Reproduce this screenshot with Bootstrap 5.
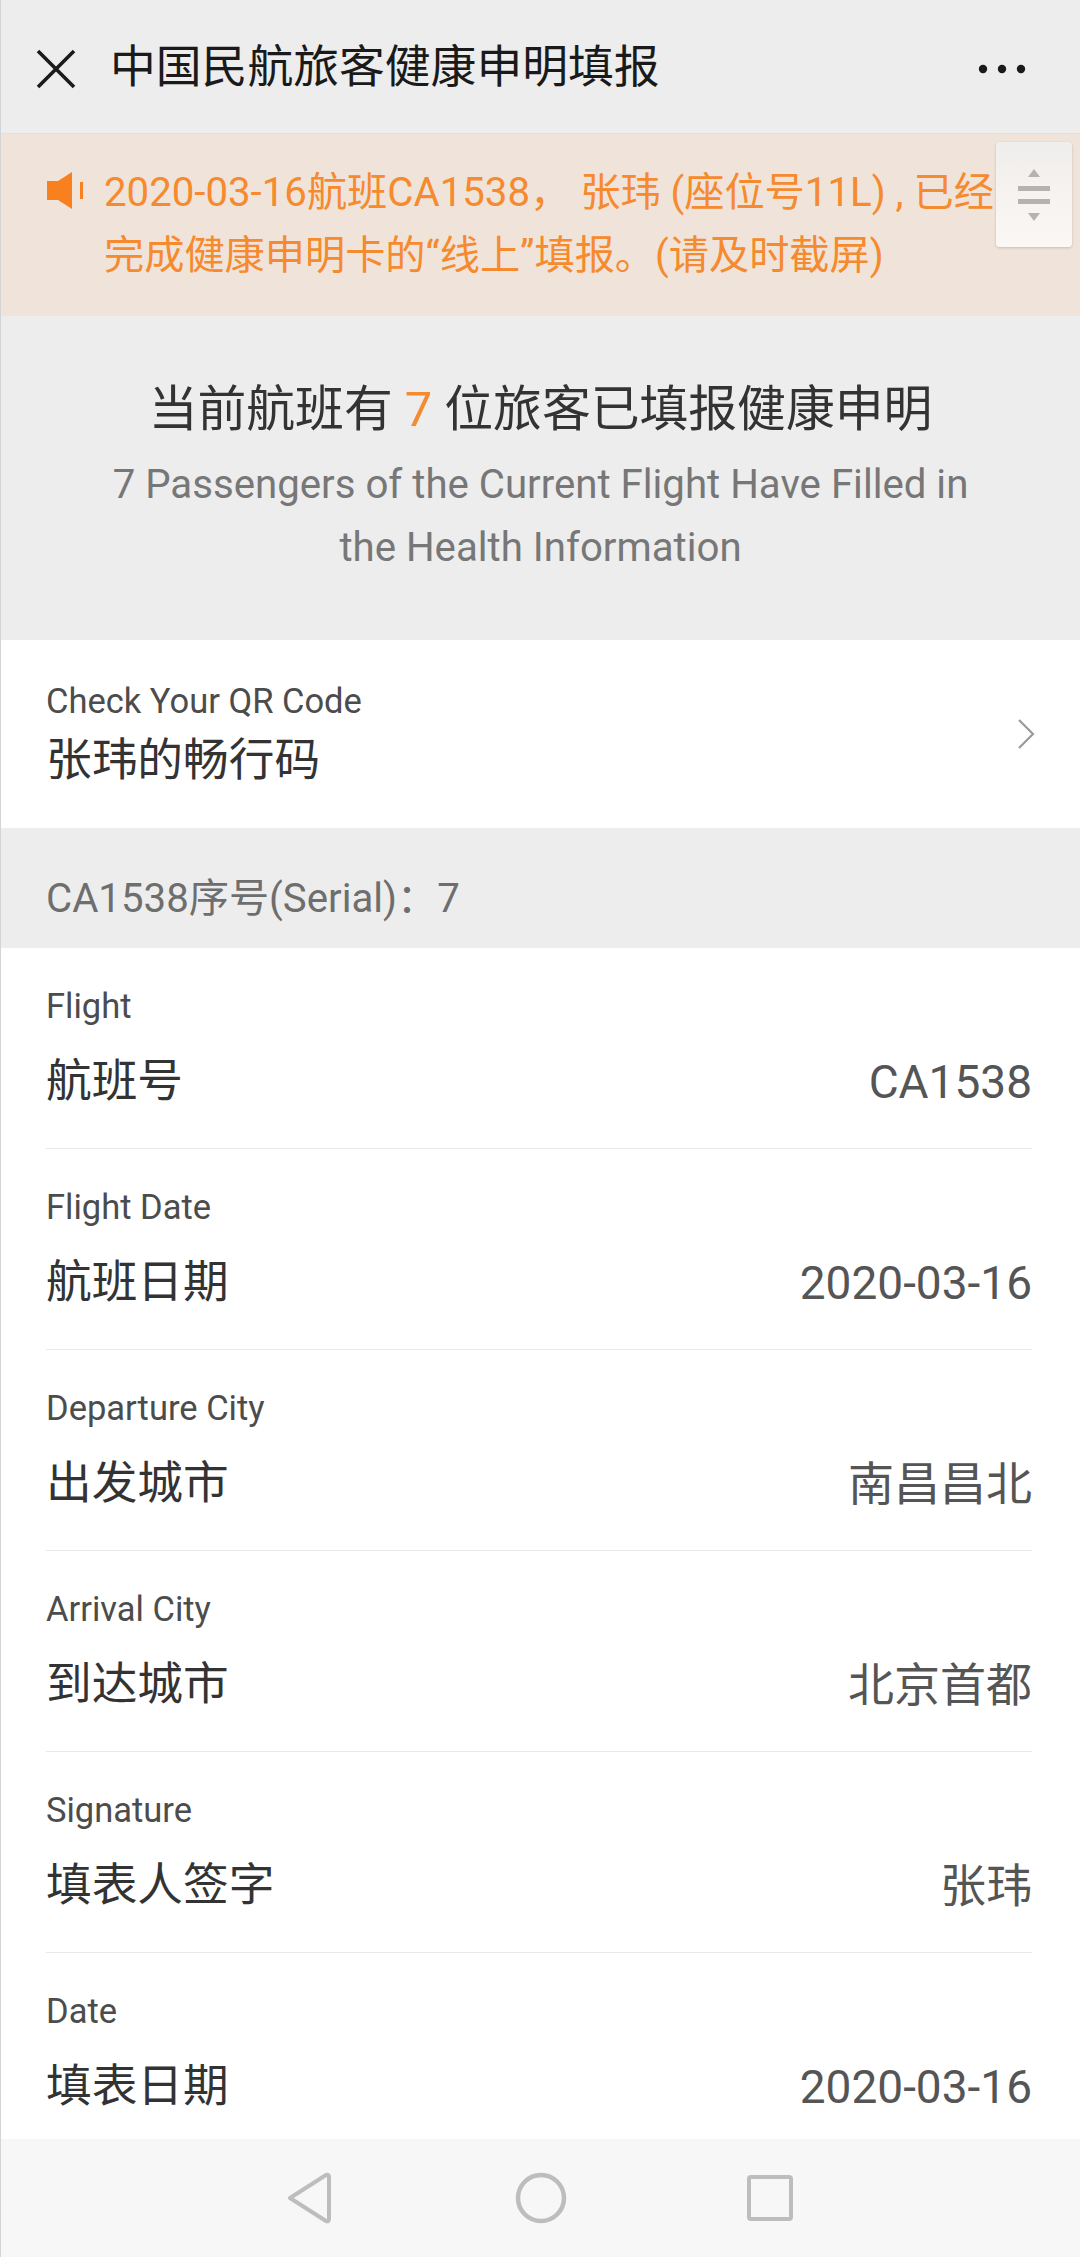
<!DOCTYPE html>
<html lang="zh-CN">
<head>
    <meta charset="UTF-8">
    <meta name="viewport" content="width=device-width, initial-scale=1.0">
    <title>中国民航旅客健康申明填报</title>
    <link href="https://cdn.jsdelivr.net/npm/bootstrap@5.3.0/dist/css/bootstrap.min.css" rel="stylesheet">
    <style>
        html, body {
            height: 2257px;
            overflow: hidden;
        }
        body {
            font-family: Roboto, "Noto Sans CJK SC", sans-serif;
            background-color: #ededed;
        }
        .phone-page {
            height: 2257px;
            border-left: 1px solid #d4d4d4;
        }
        .top-bar {
            height: 133px;
            padding: 4px 54px 0 35px;
            background-color: #ededed;
            color: #1a1a1a;
            font-size: 45.8px;
        }
        .top-title {
            margin-left: 34px;
        }
        .notice {
            height: 183px;
            padding: 27px 0 0 46px;
            background-color: #f0e4da;
            color: #f58a2e;
            font-size: 40.2px;
            line-height: 63px;
            border-top: 1px solid #e9ddd4;
        }
        .notice-icon {
            margin-top: 11px;
        }
        .notice-text {
            white-space: nowrap;
            margin-left: 20px;
        }
        .sort-handle {
            top: 8px;
            right: 8px;
            width: 76px;
            height: 105px;
            background: linear-gradient(#f0eeec, #fbf7f4);
            box-shadow: 0 1px 3px rgba(0, 0, 0, .18);
        }
        .hero {
            height: 324px;
            padding-top: 62px;
            color: #333;
        }
        .hero-title {
            font-size: 48.8px;
            line-height: 64px;
        }
        .hero-count {
            color: #f58a2e;
        }
        .hero-sub {
            margin-top: 11px;
            font-size: 40.2px;
            line-height: 63px;
            color: #777;
        }
        .qr-row {
            height: 188px;
            padding: 28px 45px 0 45px;
            background-color: #fff;
        }
        .qr-name {
            margin-top: 5px;
        }
        .qr-chevron {
            margin-bottom: 29px;
        }
        .row-label {
            font-size: 34.5px;
            line-height: 44px;
            color: #4c4c4c;
        }
        .row-name {
            font-size: 45.7px;
            line-height: 66px;
            color: #333;
        }
        .serial-bar {
            height: 120px;
            padding: 22px 0 0 45px;
            font-size: 40.2px;
            color: #6e6e6e;
        }
        .info-list {
            height: 1191px;
            overflow: hidden;
            background-color: #fff;
            padding: 0 48px 0 45px;
        }
        .info-row {
            height: 201px;
            padding-top: 36px;
            border-bottom: 1px solid #e9e9e9;
        }
        .info-row:last-child {
            border-bottom: 0;
        }
        .info-line {
            margin-top: 21px;
        }
        .info-value {
            font-size: 46px;
            line-height: 66px;
            color: #555;
        }
        .sys-nav {
            height: 118px;
            background-color: #f7f7f7;
            padding-top: 30px;
        }
    </style>
</head>
<body>
    <div class="phone-page d-flex flex-column">
        <!-- top bar -->
        <div class="top-bar d-flex align-items-center flex-shrink-0">
            <svg width="40" height="40" viewBox="0 0 40 40" aria-hidden="true">
                <path d="M2 2 L38 38 M38 2 L2 38" stroke="#1a1a1a" stroke-width="3.6" fill="none"/>
            </svg>
            <span class="top-title flex-grow-1">中国民航旅客健康申明填报</span>
            <svg width="48" height="10" viewBox="0 0 48 10" aria-hidden="true">
                <circle cx="5" cy="5" r="4.2" fill="#1a1a1a"/>
                <circle cx="24" cy="5" r="4.2" fill="#1a1a1a"/>
                <circle cx="43" cy="5" r="4.2" fill="#1a1a1a"/>
            </svg>
        </div>

        <!-- notice -->
        <div class="notice position-relative d-flex flex-shrink-0">
            <svg class="notice-icon flex-shrink-0" width="37" height="37" viewBox="0 0 37 37" aria-hidden="true">
                <path d="M0 9 H11 L25 0 V37 L11 28 H0 Z" fill="#f9801f"/>
                <path d="M34.5 10 V27" stroke="#f9801f" stroke-width="3" fill="none"/>
            </svg>
            <div class="notice-text">2020-03-16航班CA1538， 张玮 (座位号11L) , 已经<br>完成健康申明卡的“线上”填报。(请及时截屏)</div>
            <div class="sort-handle position-absolute rounded-1 d-flex flex-column align-items-center justify-content-center">
                <svg width="32" height="52" viewBox="0 0 32 52" aria-hidden="true">
                    <path d="M16 0 L22 8 H10 Z" fill="#b5b2af"/>
                    <rect x="0" y="17" width="32" height="5" fill="#b5b2af"/>
                    <rect x="0" y="30" width="32" height="5" fill="#b5b2af"/>
                    <path d="M10 44 H22 L16 52 Z" fill="#b5b2af"/>
                </svg>
            </div>
        </div>

        <!-- hero -->
        <div class="hero text-center flex-shrink-0">
            <div class="hero-title">当前航班有 <span class="hero-count">7</span> 位旅客已填报健康申明</div>
            <div class="hero-sub">7 Passengers of the Current Flight Have Filled in<br>the Health Information</div>
        </div>

        <!-- qr code -->
        <div class="qr-row d-flex justify-content-between align-items-center flex-shrink-0">
            <div class="mb-4">
                <div class="row-label">Check Your QR Code</div>
                <div class="row-name qr-name">张玮的畅行码</div>
            </div>
            <svg class="qr-chevron" width="18" height="30" viewBox="0 0 18 30" aria-hidden="true">
                <path d="M2 1 L16 15 L2 29" stroke="#9a9a9a" stroke-width="2.2" fill="none"/>
            </svg>
        </div>

        <div class="serial-bar d-flex align-items-center flex-shrink-0">CA1538序号(Serial)：7</div>

        <!-- passenger info -->
        <div class="info-list flex-shrink-0">
            <div class="info-row">
                <div class="row-label">Flight</div>
                <div class="info-line d-flex justify-content-between"><span class="row-name">航班号</span><span class="info-value">CA1538</span></div>
            </div>
            <div class="info-row">
                <div class="row-label">Flight Date</div>
                <div class="info-line d-flex justify-content-between"><span class="row-name">航班日期</span><span class="info-value">2020-03-16</span></div>
            </div>
            <div class="info-row">
                <div class="row-label">Departure City</div>
                <div class="info-line d-flex justify-content-between"><span class="row-name">出发城市</span><span class="info-value">南昌昌北</span></div>
            </div>
            <div class="info-row">
                <div class="row-label">Arrival City</div>
                <div class="info-line d-flex justify-content-between"><span class="row-name">到达城市</span><span class="info-value">北京首都</span></div>
            </div>
            <div class="info-row">
                <div class="row-label">Signature</div>
                <div class="info-line d-flex justify-content-between"><span class="row-name">填表人签字</span><span class="info-value">张玮</span></div>
            </div>
            <div class="info-row">
                <div class="row-label">Date</div>
                <div class="info-line d-flex justify-content-between"><span class="row-name">填表日期</span><span class="info-value">2020-03-16</span></div>
            </div>
        </div>

        <!-- android nav -->
        <div class="sys-nav d-flex justify-content-center flex-shrink-0">
            <svg width="600" height="60" viewBox="0 0 600 60" aria-hidden="true">
                <path d="M49 29 L85 6 Q88 5 88 8 V50 Q88 53 85 52 Z" stroke="#bdbdbd" stroke-width="4" stroke-linejoin="round" fill="none"/>
                <circle cx="300" cy="29" r="23" stroke="#bdbdbd" stroke-width="4.5" fill="none"/>
                <rect x="508" y="8" width="42" height="42" rx="2" stroke="#bdbdbd" stroke-width="4" fill="none"/>
            </svg>
        </div>
    </div>

    <script src="https://cdn.jsdelivr.net/npm/bootstrap@5.3.0/dist/js/bootstrap.bundle.min.js"></script>
</body>
</html>
